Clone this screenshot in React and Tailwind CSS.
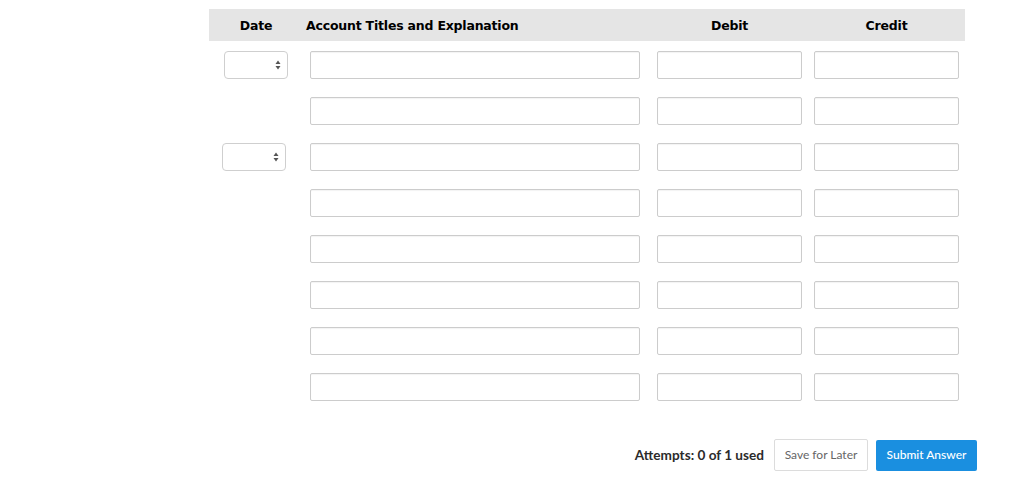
import { Fragment } from 'react';

const rows = [true, false, true, false, false, false, false, false];

const DateSelect = ({ shift }) => (
  <div className={`relative h-[28px] w-[64px] rounded-[4px] border border-[#cfcfcf] bg-white ${shift ? 'ml-[13px]' : 'ml-[15px]'}`}>
    <svg className="absolute right-[6px] top-1/2 -translate-y-1/2" width="6" height="10" viewBox="0 0 6 10">
      <path d="M3 0.5 L5.5 4 L0.5 4 Z" fill="#555" />
      <path d="M3 9.5 L5.5 6 L0.5 6 Z" fill="#555" />
    </svg>
  </div>
);

const Field = ({ w }) => (
  <div className={`h-[28px] ${w} rounded-[2px] border border-[#cccccc] bg-white shadow-[inset_0_1px_1px_rgba(0,0,0,0.05)]`} />
);

export default function App() {
  return (
    <div className="min-h-[484px] w-[1024px] bg-white pt-[9px]">
      <div className="ml-[209px] w-[756px]">
        {/* header */}
        <div className="grid h-[32px] grid-cols-[101px_347px_157px_151px] items-center bg-[#e5e5e5] pt-[2px] text-[12.5px] font-bold tracking-[-0.2px] text-black [font-family:'DejaVu_Sans',Verdana,sans-serif]">
          <div className="pl-[15px] w-[79px] text-center">Date</div>
          <div className="-ml-[4px]">Account Titles and Explanation</div>
          <div className="w-[145px] text-center">Debit</div>
          <div className="w-[145px] text-center">Credit</div>
        </div>

        <div className="mt-[10px] grid grid-cols-[101px_347px_157px_151px] gap-y-[18px]">
          {rows.map((hasDate, i) => (
            <Fragment key={i}>
              <div>{hasDate && <DateSelect shift={i === 2} />}</div>
              <Field w="w-[330px]" />
              <Field w="w-[145px]" />
              <Field w="w-[145px]" />
            </Fragment>
          ))}
        </div>
      </div>

      <div className="mt-[38px] flex w-[977px] items-center justify-end [font-family:Lato,sans-serif]">
        <span className="mr-[10px] text-[13.6px] font-bold text-[#2b2b2b]">Attempts: 0 of 1 used</span>
        <button className="mr-[8px] h-[32px] w-[94px] rounded-[2px] border border-[#dcdcdc] bg-white text-[12px] text-[#666]">
          Save for Later
        </button>
        <button className="h-[31px] w-[101px] rounded-[2px] bg-[#1a8fe0] text-[12px] font-medium text-white">
          Submit Answer
        </button>
      </div>
    </div>
  );
}
